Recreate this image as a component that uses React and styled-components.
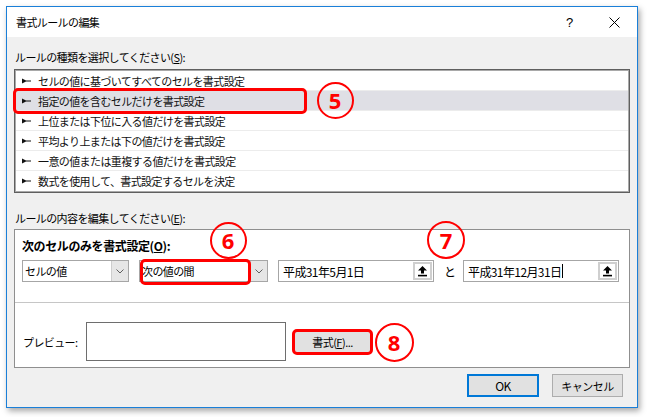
import React from 'react';
import styled, { createGlobalStyle } from 'styled-components';

const Global = createGlobalStyle`
  html, body { margin: 0; padding: 0; background: #ffffff; }
  body {
    font-family: "Noto Sans CJK JP", "Noto Sans", sans-serif;
    font-size: 11px;
    color: #000;
  }
  * { box-sizing: border-box; }
`;

const Page = styled.div`
  position: relative;
  width: 648px;
  height: 417px;
  padding: 6px 0 0 6px;
  overflow: hidden;
  background: #fff;
`;

const Window = styled.div`
  width: 632px;
  border: 1px solid #1a7fd8;
  background: #f0f0f0;
  box-shadow: 2px 3px 6px rgba(0, 0, 0, 0.35);
`;

const TitleBar = styled.div`
  height: 30px;
  background: #fff;
  display: flex;
  align-items: center;
  padding-left: 9px;
`;

const TitleText = styled.div`
  flex: 1;
  font-size: 11px;
  letter-spacing: -0.6px;
  color: #000;
`;

const TitleButton = styled.div`
  width: 45px;
  height: 30px;
  display: flex;
  align-items: center;
  justify-content: center;
  font-family: "Liberation Sans", sans-serif;
  font-size: 13px;
  color: #000;
`;

const Body = styled.div`
  padding: 12px 7px 10px 7px;
`;

const SectionLabel = styled.div`
  height: 16px;
  line-height: 16px;
  margin-top: ${(p) => p.$mt}px;
  margin-bottom: ${(p) => p.$mb}px;
  letter-spacing: -0.6px;
  padding-left: 1px;
`;

const ListBox = styled.div`
  height: 124px;
  border: 1px solid #5f5f5f;
  padding: 1px;
  background: #fff;
  box-shadow: inset 0 0 0 1px #a9a9a9;
`;

const ListRow = styled.div`
  height: 20px;
  display: flex;
  align-items: center;
  padding-left: 6px;
  gap: 7px;
  background: ${(p) => (p.$selected ? '#dfdfe5' : '#fff')};
  border-bottom: 1px solid ${(p) => (p.$last ? 'transparent' : '#ececec')};
  letter-spacing: -0.6px;
  color: #111;
`;

const Group = styled.div`
  background: #fff;
  border: 1px solid #8f8f8f;
`;

const GroupTop = styled.div`
  padding: 9px 7px 20px 7px;
  border-bottom: 1px solid #c6c6c6;
`;

const GroupTitle = styled.div`
  height: 14px;
  line-height: 14px;
  font-size: 12px;
  font-weight: bold;
  letter-spacing: -0.4px;
  margin-bottom: 7px;
`;

const FieldRow = styled.div`
  display: flex;
  align-items: center;
  height: 22px;
  gap: 10px;
`;

const Combo = styled.div`
  display: flex;
  width: ${(p) => p.$w}px;
  height: 22px;
  border: 1px solid #a6a6a6;
  background: #fff;
`;

const ComboText = styled.div`
  flex: 1;
  line-height: 20px;
  padding-left: 2px;
  letter-spacing: -0.6px;
`;

const ComboArrow = styled.div`
  width: 17px;
  background: #e6e6e6;
  border-left: 1px solid #cdcdcd;
  display: flex;
  align-items: center;
  justify-content: center;
`;

const DateField = styled.div`
  display: flex;
  width: 156px;
  height: 22px;
  border: 1px solid #a6a6a6;
  background: #fff;
  padding: 1px;
`;

const DateText = styled.div`
  flex: 1;
  display: flex;
  align-items: center;
  padding-left: 3px;
  font-size: 12px;
  letter-spacing: -0.6px;
`;

const Caret = styled.span`
  display: inline-block;
  width: 1px;
  height: 14px;
  background: #000;
  margin-left: 1px;
`;

const CollapseButton = styled.div`
  width: 19px;
  height: 18px;
  background: #fff;
  border: 2px solid #cfcfcf;
  display: flex;
  align-items: center;
  justify-content: center;
`;

const AndText = styled.div`
  width: 9px;
  text-align: center;
  font-size: 12px;
`;

const GroupBottom = styled.div`
  padding: 19px 7px 6px 8px;
  display: flex;
  align-items: center;
`;

const PreviewLabel = styled.div`
  width: 63px;
  letter-spacing: -0.6px;
`;

const PreviewBox = styled.div`
  width: 200px;
  height: 39px;
  border: 1px solid #6e6e6e;
  background: #fff;
`;

const Button = styled.div`
  width: ${(p) => p.$w}px;
  height: ${(p) => p.$h}px;
  margin-left: ${(p) => p.$ml || 0}px;
  background: #e1e1e1;
  border: ${(p) => (p.$default ? '2px solid #0078d7' : '1px solid #adadad')};
  display: flex;
  align-items: center;
  justify-content: center;
  font-size: ${(p) => p.$fs || 11}px;
  letter-spacing: -0.5px;
  color: #000;
`;

const Footer = styled.div`
  margin-top: 6px;
  display: flex;
  justify-content: flex-end;
  gap: 13px;
  padding-right: 7px;
`;

const RedBox = styled.div`
  position: absolute;
  left: ${(p) => p.$x}px;
  top: ${(p) => p.$y}px;
  width: ${(p) => p.$w}px;
  height: ${(p) => p.$h}px;
  border: 3px solid #ff0000;
  border-radius: 5px;
  pointer-events: none;
`;

const Marker = styled.div`
  position: absolute;
  left: ${(p) => p.$cx - p.$d / 2}px;
  top: ${(p) => p.$cy - p.$d / 2}px;
  width: ${(p) => p.$d}px;
  height: ${(p) => p.$d}px;
  border: 2.5px solid #ff0000;
  border-radius: 50%;
  display: flex;
  align-items: center;
  justify-content: center;
  color: #ff0000;
  font-family: "Noto Sans", "Liberation Sans", sans-serif;
  font-weight: bold;
  font-size: 22px;
  line-height: 1;
  padding-bottom: 1px;
`;

const Pointer = () => (
  <svg width="9" height="6" viewBox="0 0 9 6">
    <polygon points="0,0.5 4,2.4 9,2.4 9,3.6 4,3.6 0,5.5" fill="#111" />
  </svg>
);

const Chevron = () => (
  <svg width="8" height="5" viewBox="0 0 8 5">
    <polyline points="0.5,0.5 4,4 7.5,0.5" fill="none" stroke="#606060" strokeWidth="1" />
  </svg>
);

const UpArrow = () => (
  <svg width="9" height="11" viewBox="0 0 9 11">
    <path d="M4.5 0 L9 4.6 H6 V7.6 H3 V4.6 H0 Z" fill="#000" />
    <rect x="0" y="8.8" width="9" height="1.6" fill="#000" />
  </svg>
);

const CloseIcon = () => (
  <svg width="11" height="11" viewBox="0 0 11 11">
    <path d="M0.5 0.5 L10.5 10.5 M10.5 0.5 L0.5 10.5" stroke="#000" strokeWidth="1" />
  </svg>
);

const rules = [
  'セルの値に基づいてすべてのセルを書式設定',
  '指定の値を含むセルだけを書式設定',
  '上位または下位に入る値だけを書式設定',
  '平均より上または下の値だけを書式設定',
  '一意の値または重複する値だけを書式設定',
  '数式を使用して、書式設定するセルを決定',
];

export default function App() {
  return (
    <>
      <Global />
      <Page>
        <Window>
          <TitleBar>
            <TitleText>書式ルールの編集</TitleText>
            <TitleButton>?</TitleButton>
            <TitleButton>
              <CloseIcon />
            </TitleButton>
          </TitleBar>
          <Body>
            <SectionLabel $mt={0} $mb={4}>
              ルールの種類を選択してください(<u>S</u>):
            </SectionLabel>
            <ListBox>
              {rules.map((r, i) => (
                <ListRow key={r} $selected={i === 1} $last={i === rules.length - 1}>
                  <Pointer />
                  <span>{r}</span>
                </ListRow>
              ))}
            </ListBox>
            <SectionLabel $mt={17} $mb={3}>
              ルールの内容を編集してください(<u>E</u>):
            </SectionLabel>
            <Group>
              <GroupTop>
                <GroupTitle>
                  次のセルのみを書式設定(<u>O</u>):
                </GroupTitle>
                <FieldRow>
                  <Combo $w={107}>
                    <ComboText>セルの値</ComboText>
                    <ComboArrow>
                      <Chevron />
                    </ComboArrow>
                  </Combo>
                  <Combo $w={129}>
                    <ComboText>次の値の間</ComboText>
                    <ComboArrow>
                      <Chevron />
                    </ComboArrow>
                  </Combo>
                  <DateField>
                    <DateText>平成31年5月1日</DateText>
                    <CollapseButton>
                      <UpArrow />
                    </CollapseButton>
                  </DateField>
                  <AndText>と</AndText>
                  <DateField>
                    <DateText>
                      平成31年12月31日
                      <Caret />
                    </DateText>
                    <CollapseButton>
                      <UpArrow />
                    </CollapseButton>
                  </DateField>
                </FieldRow>
              </GroupTop>
              <GroupBottom>
                <PreviewLabel>プレビュー:</PreviewLabel>
                <PreviewBox />
                <Button $w={77} $h={22} $ml={8}>
                  書式(<u>F</u>)...
                </Button>
              </GroupBottom>
            </Group>
            <Footer>
              <Button $w={72} $h={23} $fs={12} $default>
                OK
              </Button>
              <Button $w={71} $h={23}>
                キャンセル
              </Button>
            </Footer>
          </Body>
        </Window>

        <RedBox $x={13} $y={88} $w={294} $h={26} />
        <RedBox $x={140} $y={259} $w={111} $h={26} />
        <RedBox $x={292} $y={329} $w={81} $h={26} />
        <Marker $cx={335} $cy={100} $d={37}>5</Marker>
        <Marker $cx={228} $cy={240} $d={37}>6</Marker>
        <Marker $cx={446} $cy={240} $d={38}>7</Marker>
        <Marker $cx={394} $cy={342} $d={39}>8</Marker>
      </Page>
    </>
  );
}
